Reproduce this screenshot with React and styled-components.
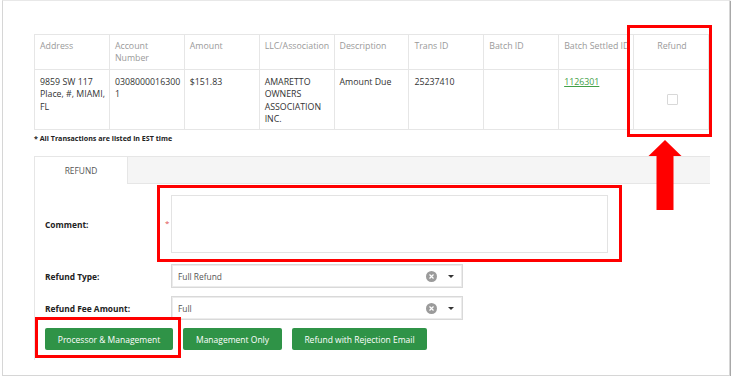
import React from "react";
import styled, { createGlobalStyle } from "styled-components";

const GlobalStyle = createGlobalStyle`
  html, body {
    margin: 0;
    padding: 0;
    background: #fff;
    font-family: "Open Sans", "Noto Sans", sans-serif;
  }
`;

const Frame = styled.div`
  position: relative;
  box-sizing: border-box;
  width: 728px;
  height: 376px;
  margin-left: 2px;
  border: 1px solid #d6d6d6;
  border-top-color: #e8e8e8;
  box-shadow: 1px 1px 1px #a8a8a8;
  padding: 33px 0 0 31px;
  background: #fff;
`;

const Table = styled.table`
  width: 675px;
  border-collapse: collapse;
  table-layout: fixed;
  font-size: 8.8px;
  line-height: 12.4px;
`;

const Th = styled.th`
  border: 1px solid #e6e6e6;
  height: 35px;
  padding: 5px 3px 3px 5px;
  vertical-align: top;
  text-align: ${(p) => (p.center ? "center" : "left")};
  font-weight: 400;
  color: #9a9a9a;
  white-space: ${(p) => (p.wrap ? "normal" : "nowrap")};
  overflow: hidden;
  box-sizing: border-box;
`;

const Td = styled.td`
  border: 1px solid #e6e6e6;
  height: 60px;
  padding: 6px 2px 2px 5px;
  vertical-align: top;
  color: #333;
  box-sizing: border-box;
  text-align: ${(p) => (p.center ? "center" : "left")};
  word-break: ${(p) => (p.breakAll ? "break-all" : "normal")};
`;

const Link = styled.a`
  color: #43a047;
  text-decoration: underline;
`;

const Check = styled.span`
  display: inline-block;
  width: 9px;
  height: 9px;
  margin-top: 18px;
  border: 1px solid #d8d8d8;
  border-radius: 1px;
`;

const Note = styled.div`
  margin-top: 3px;
  font-size: 7.1px;
  font-weight: 700;
  color: #222;
`;

const Panel = styled.div`
  width: 676px;
  margin-top: 13px;
`;

const TabBar = styled.div`
  display: flex;
  height: 28px;
  box-sizing: border-box;
  background: #f5f5f5;
  border-top: 1px solid #e6e6e6;
  border-bottom: 1px solid #e6e6e6;
`;

const Tab = styled.div`
  width: 92px;
  margin-bottom: -1px;
  display: flex;
  align-items: center;
  justify-content: center;
  background: #fff;
  border-left: 1px solid #e6e6e6;
  border-right: 1px solid #e6e6e6;
  font-size: 8.4px;
  color: #555;
`;

const Body = styled.div`
  border-left: 1px solid #e6e6e6;
  padding: 11px 0 10px 10px;
  display: flex;
  flex-direction: column;
`;

const Row = styled.div`
  display: flex;
  align-items: center;
  margin-bottom: ${(p) => p.gap || 0}px;
`;

const Label = styled.div`
  width: 126px;
  flex: 0 0 126px;
  font-size: 8.4px;
  font-weight: 700;
  color: #222;
`;

const Field = styled.div`
  position: relative;
`;

const Required = styled.span`
  position: absolute;
  left: -6px;
  top: 22px;
  color: #e05050;
  font-size: 8px;
`;

const TextArea = styled.div`
  width: 437px;
  height: 58px;
  box-sizing: border-box;
  border: 1px solid #e3e3e3;
  background: #fff;
`;

const Select = styled.div`
  width: 292px;
  height: 24px;
  box-sizing: border-box;
  border: 1px solid #d9d9d9;
  box-shadow: inset 0 0 0 1px #ececec;
  display: flex;
  align-items: center;
  padding: 0 8px 0 6px;
  font-size: 8.4px;
  color: #555;
`;

const Value = styled.span`
  flex: 1;
`;

const Clear = styled.span`
  width: 11px;
  height: 11px;
  border-radius: 50%;
  background: #9b9b9b;
  display: flex;
  align-items: center;
  justify-content: center;
  margin-right: 11px;
`;

const Caret = styled.span`
  width: 0;
  height: 0;
  border-left: 3px solid transparent;
  border-right: 3px solid transparent;
  border-top: 3px solid #333;
`;

const Buttons = styled.div`
  display: flex;
  gap: 10px;
`;

const Button = styled.button`
  width: ${(p) => p.w}px;
  height: 22px;
  padding: 0;
  border: none;
  border-radius: 2px;
  background: #2f9347;
  color: #fff;
  font-family: inherit;
  font-size: 8.5px;
  white-space: nowrap;
  cursor: pointer;
`;

const Highlight = styled.div`
  position: absolute;
  box-sizing: border-box;
  border: 3px solid #ff0000;
  pointer-events: none;
`;

const Arrow = styled.svg`
  position: absolute;
  left: 644px;
  top: 139px;
`;

const columns = [
  "Address",
  "Account Number",
  "Amount",
  "LLC/Association",
  "Description",
  "Trans ID",
  "Batch ID",
  "Batch Settled ID",
];

function ClearIcon() {
  return (
    <Clear>
      <svg width="7" height="7" viewBox="0 0 7 7">
        <path d="M1.5 1.5L5.5 5.5M5.5 1.5L1.5 5.5" stroke="#fff" strokeWidth="1.2" />
      </svg>
    </Clear>
  );
}

export default function App() {
  return (
    <>
      <GlobalStyle />
      <Frame>
        <Table>
          <thead>
            <tr>
              {columns.map((c) => (
                <Th key={c} wrap={c === "Account Number"}>
                  {c}
                </Th>
              ))}
              <Th center>Refund</Th>
            </tr>
          </thead>
          <tbody>
            <tr>
              <Td>9859 SW 117 Place, #, MIAMI, FL</Td>
              <Td breakAll>03080000163001</Td>
              <Td>$151.83</Td>
              <Td>AMARETTO OWNERS ASSOCIATION INC.</Td>
              <Td>Amount Due</Td>
              <Td>25237410</Td>
              <Td></Td>
              <Td>
                <Link>1126301</Link>
              </Td>
              <Td center>
                <Check />
              </Td>
            </tr>
          </tbody>
        </Table>
        <Note>* All Transactions are listed in EST time</Note>

        <Panel>
          <TabBar>
            <Tab>REFUND</Tab>
          </TabBar>
          <Body>
            <Row gap={11}>
              <Label>Comment:</Label>
              <Field>
                <Required>*</Required>
                <TextArea />
              </Field>
            </Row>
            <Row gap={8}>
              <Label>Refund Type:</Label>
              <Select>
                <Value>Full Refund</Value>
                <ClearIcon />
                <Caret />
              </Select>
            </Row>
            <Row gap={8}>
              <Label>Refund Fee Amount:</Label>
              <Select>
                <Value>Full</Value>
                <ClearIcon />
                <Caret />
              </Select>
            </Row>
            <Buttons>
              <Button w={128}>Processor &amp; Management</Button>
              <Button w={99}>Management Only</Button>
              <Button w={135}>Refund with Rejection Email</Button>
            </Buttons>
          </Body>
        </Panel>

        <Highlight style={{ left: 624, top: 24, width: 85, height: 112 }} />
        <Highlight style={{ left: 154, top: 184, width: 465, height: 77 }} />
        <Highlight style={{ left: 32, top: 316, width: 146, height: 41 }} />
        <Arrow width="36" height="72" viewBox="0 0 36 72">
          <path d="M18 0L34.5 16H26.5V70H9.5V16H1.5Z" fill="#ff0000" />
        </Arrow>
      </Frame>
    </>
  );
}
